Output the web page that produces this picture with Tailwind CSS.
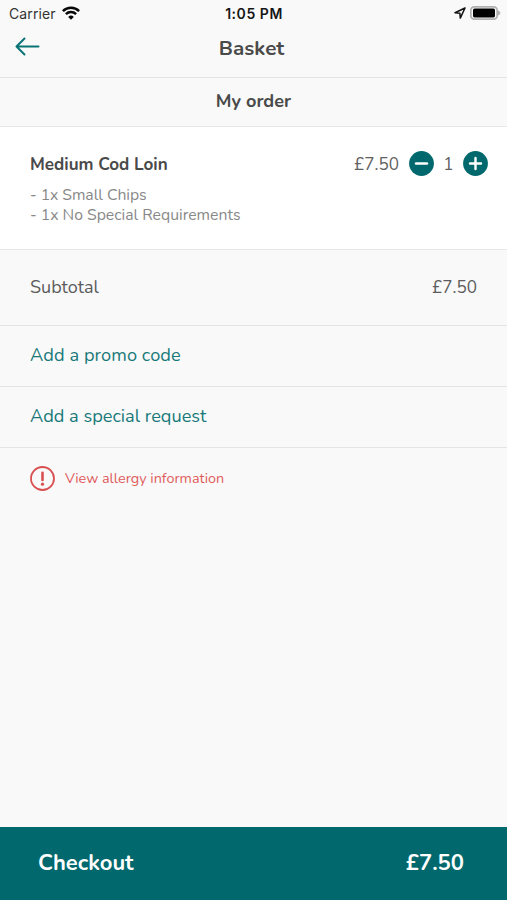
<!DOCTYPE html>
<html lang="en">
<head>
<meta charset="utf-8">
<title>Basket</title>
<script src="https://cdn.jsdelivr.net/npm/@tailwindcss/browser@4"></script>
</head>
<body class="bg-[#f9f9f9]">
<div class="flex h-[900px] w-[507px] flex-col overflow-hidden bg-[#f9f9f9] font-['Nunito','Lato','Noto_Sans',sans-serif] text-[#4a4a4a]">
  <header class="h-[78px] shrink-0 border-b border-[#e3e4e4]">
    <div class="grid h-[27px] grid-cols-3 items-center px-[9px] font-['Inter',sans-serif] text-[14px] leading-[27px] text-[#161616]">
      <div class="flex items-center gap-[6px]">
        <span class="tracking-[0.1px] text-[#333]">Carrier</span>
        <svg class="-mt-[2px] h-[14px] w-[18px]" viewBox="0 0 18 14" fill="none" stroke="#080808" stroke-width="2.5"><path d="M.9 5.1a11.6 11.6 0 0 1 16.2 0"/><path d="M3.9 8.2a7.3 7.3 0 0 1 10.2 0"/><path d="M9 13.7 6.2 10.9a4 4 0 0 1 5.6 0z" fill="#080808" stroke="none"/></svg>
      </div>
      <span class="pl-[1px] text-center font-semibold tracking-[0.55px]">1:05 PM</span>
      <div class="flex items-center justify-end">
        <svg class="-mt-[1px] mr-[4px] h-[12px] w-[12px]" viewBox="0 0 12 12" fill="none" stroke="#111" stroke-width="1.5" stroke-linejoin="round"><path d="M11 1 1 5.8l4.9.4.4 4.9z"/></svg>
        <svg class="-mt-[1px] -mr-[3px] h-[14px] w-[31px]" viewBox="0 0 31 14"><rect x=".8" y=".8" width="26.4" height="12.4" rx="3.6" fill="#f9f9f9" stroke="#b1b1b1" stroke-width="1.8"/><rect x="3" y="2.6" width="22" height="8.8" rx="1.6" fill="#000"/><path d="M28 4.6q2.4 .8 2.4 2.4t-2.4 2.4z" fill="#b1b1b1"/></svg>
      </div>
    </div>
    <div class="grid grid-cols-[1fr_auto_1fr] items-start pr-[19px] pl-[15px]">
      <svg class="mt-[10px] h-[20px] w-[25px]" viewBox="0 0 25 20" fill="none" stroke="#0b7476" stroke-width="2" stroke-linecap="round" stroke-linejoin="round"><path d="M23.5 9.5H1.5M9.5 1.5l-8 8 8 8"/></svg>
      <h1 class="text-[20.6px] leading-[42px] font-bold">Basket</h1>
    </div>
  </header>
  <h2 class="h-[48px] shrink-0 text-center text-[18.1px] leading-[46px] font-bold">My order</h2>
  <section class="h-[124px] shrink-0 border-y border-[#e6e7e7] bg-white pt-[23px] pr-[19px] pl-[30px]">
    <div class="flex h-[27px] items-center justify-between">
      <h3 class="pt-[2px] text-[17.1px] font-bold">Medium Cod Loin</h3>
      <div class="flex items-center text-[17.1px] text-[#606060]">
        <span class="mr-[10px] pt-[2px]">£7.50</span>
        <svg class="h-[25px] w-[25px]" viewBox="0 0 25 25"><circle cx="12.5" cy="12.5" r="12.4" fill="#01696d"/><path d="M7 12.5h11" stroke="#fff" stroke-width="2.4" stroke-linecap="round"/></svg>
        <span class="w-[29px] pt-[2px] text-center">1</span>
        <svg class="h-[25px] w-[25px]" viewBox="0 0 25 25"><circle cx="12.5" cy="12.5" r="12.4" fill="#01696d"/><path d="M7 12.5h11M12.5 7v11" stroke="#fff" stroke-width="2.4" stroke-linecap="round"/></svg>
      </div>
    </div>
    <div class="pt-[8px] text-[15.75px] leading-[20px] text-[#888]">
      <p class="w-fit tracking-[-0.05px]">- 1x Small Chips</p>
      <p class="w-fit">- 1x No Special Requirements</p>
    </div>
  </section>
  <div class="flex h-[76px] shrink-0 items-center justify-between border-b border-[#e3e4e4] px-[30px] text-[18px] text-[#5c5c5c]"><span>Subtotal</span><span class="text-[17.1px]">£7.50</span></div>
  <a class="flex h-[61px] shrink-0 items-center border-b border-[#e3e4e4] px-[30px] pb-[1px] text-[18.2px] text-[#19797a]"><span class="tracking-[0.08px]">Add a promo code</span></a>
  <a class="flex h-[61px] shrink-0 items-center border-b border-[#e3e4e4] px-[30px] pb-[1px] text-[18.2px] text-[#19797a]"><span>Add a special request</span></a>
  <a class="flex h-[61px] shrink-0 items-center gap-[10px] px-[30px] text-[14.4px] text-[#e05c5c]">
    <svg class="h-[25px] w-[25px]" viewBox="0 0 25 25" fill="none" stroke="#d94f50"><circle cx="12.5" cy="12.5" r="11.5" stroke-width="1.8"/><path d="M12.5 6.7v7.2" stroke-width="2.6" stroke-linecap="round"/><circle cx="12.5" cy="18.2" r="1.6" fill="#d94f50" stroke="none"/></svg>
    <span>View allergy information</span>
  </a>
  <footer class="mt-auto flex h-[73px] shrink-0 items-center justify-between bg-[#01696d] pr-[43px] pb-[1px] pl-[38px] text-[22px] font-bold text-white"><span>Checkout</span><span>£7.50</span></footer>
</div>
</body>
</html>
